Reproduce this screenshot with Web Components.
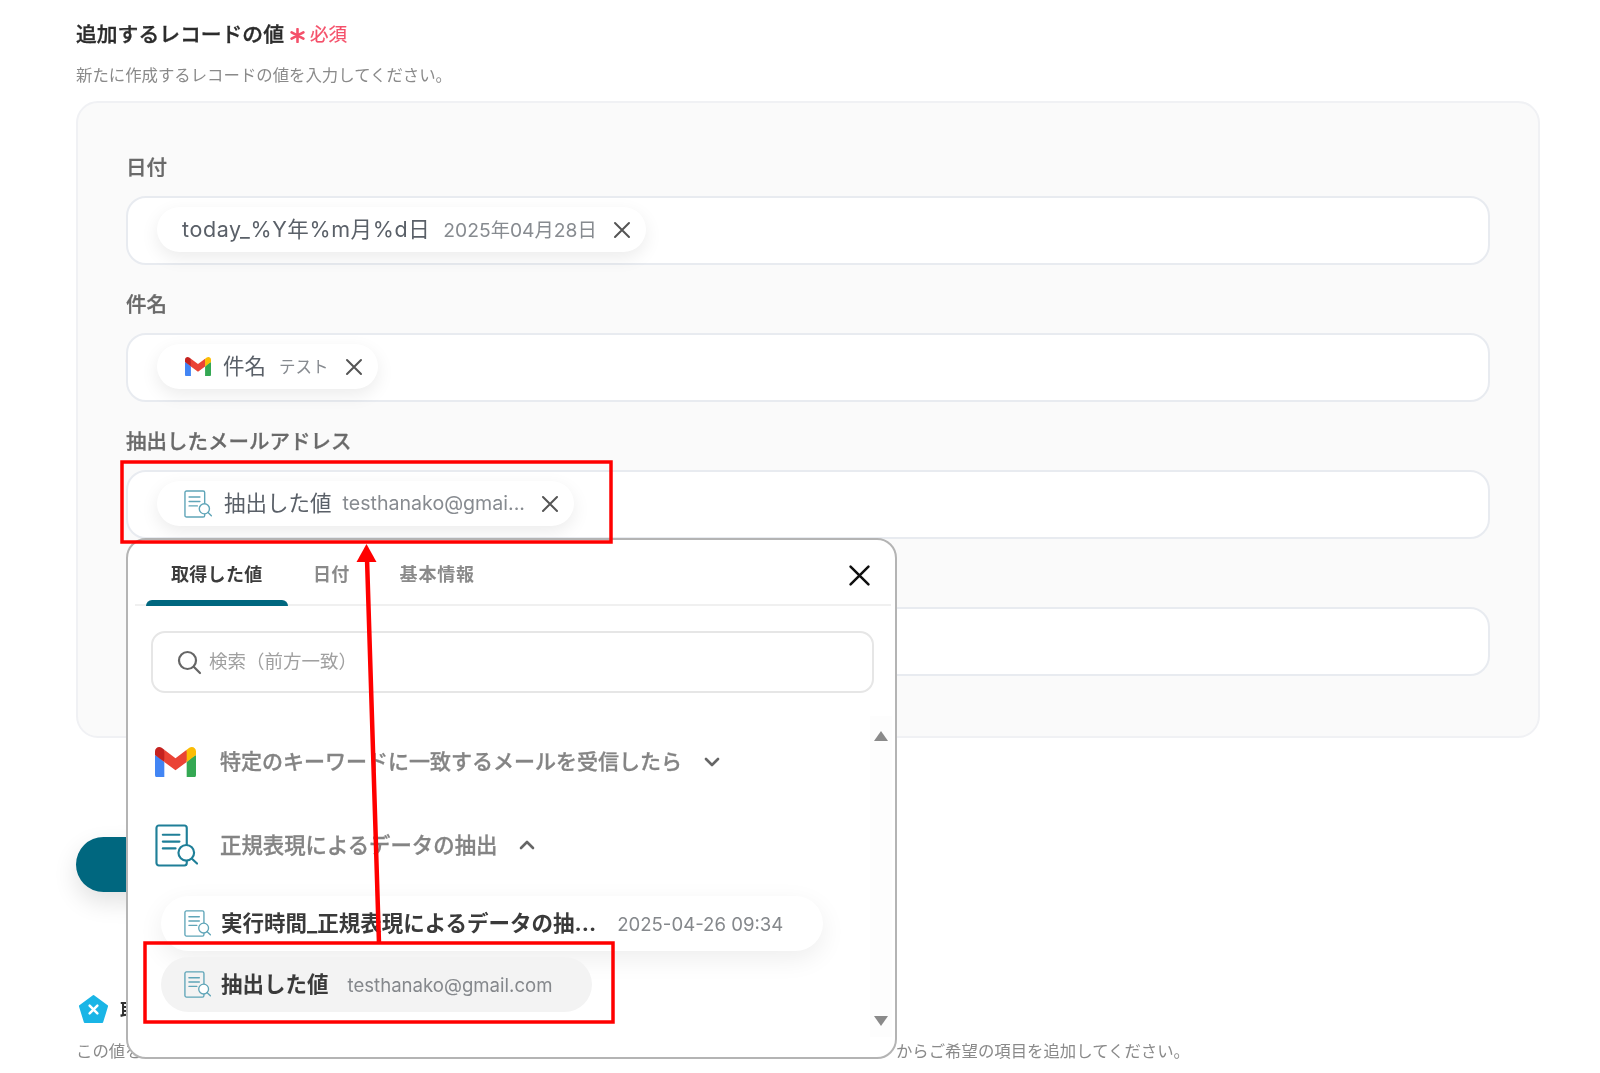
<!DOCTYPE html>
<html lang="ja">
<head>
<meta charset="utf-8">
<title>追加するレコードの値</title>
<style>
  html, body { margin: 0; background: #fff; }
  body { font-family: Inter, "Noto Sans CJK JP", sans-serif; color: #333; }
</style>
</head>
<body>
<record-page>
  <span slot="title">追加するレコードの値</span>
  <span slot="desc">新たに作成するレコードの値を入力してください。</span>

  <record-field label="日付">
    <value-chip label="today_%Y年%m月%d日" value="2025年04月28日" style="--label-space:.6px"></value-chip>
  </record-field>
  <record-field label="件名">
    <value-chip label="件名" value="テスト" small>
      <gmail-icon slot="icon" style="width:26px;margin-left:3px"></gmail-icon>
    </value-chip>
  </record-field>
  <record-field label="抽出したメールアドレス">
    <value-chip label="抽出した値" value="testhanako@gmai..." style="--value-gap:11px;--value-size:19.600px">
      <doc-icon slot="icon" light style="width:28px;margin-left:2px"></doc-icon>
    </value-chip>
  </record-field>
  <record-field label="　"></record-field>

  <value-popup slot="overlay"></value-popup>
  <red-marks slot="overlay"></red-marks>
</record-page>

<script>
const FONT = 'Inter, "Noto Sans CJK JP", sans-serif';

class GmailIcon extends HTMLElement {
  constructor() {
    super();
    this.attachShadow({ mode: 'open' });
    this.shadowRoot.innerHTML = `
      <style>:host { display: block; flex: none; } svg { display: block; width: 100%; height: auto; }</style>
      <svg viewBox="0 0 256 193">
        <path fill="#4285F4" d="M58.182 192.05V93.14L27.507 65.077 0 49.504v125.091c0 9.658 7.825 17.455 17.455 17.455h40.727Z"/>
        <path fill="#34A853" d="M197.818 192.05h40.727c9.659 0 17.455-7.826 17.455-17.455V49.505l-31.156 17.837-27.026 25.798v98.91Z"/>
        <path fill="#EA4335" d="m58.182 93.14-4.174-38.647 4.174-36.989L128 69.868l69.818-52.364 4.669 34.992-4.669 40.644L128 145.504z"/>
        <path fill="#FBBC04" d="M197.818 17.504V93.14L256 49.504V26.231c0-21.585-24.64-33.89-41.89-20.945l-16.292 12.218Z"/>
        <path fill="#C5221F" d="M0 49.504l26.759 20.07L58.182 93.14V17.504L41.89 5.286C24.61-7.66 0 4.646 0 26.23v23.273Z"/>
      </svg>`;
  }
}

class DocIcon extends HTMLElement {
  constructor() {
    super();
    this.attachShadow({ mode: 'open' });
    const color = this.hasAttribute('light') ? '#5fa5b8' : '#1f7f98';
    this.shadowRoot.innerHTML = `
      <style>:host { display: block; flex: none; } svg { display: block; width: 100%; height: auto; }</style>
      <svg viewBox="0 0 44 44" fill="none" stroke="${color}" stroke-width="2.200" stroke-linecap="round">
        <rect x="1.500" y="1.500" width="31" height="41" rx="2.500"/>
        <path d="M8 11h17M8 18h17M8 25h13"/>
        <circle cx="32" cy="29.500" r="8" fill="#fff"/>
        <path d="M37.800 35.500 43 40.500"/>
      </svg>`;
  }
}

class CloseIcon extends HTMLElement {
  constructor() {
    super();
    this.attachShadow({ mode: 'open' });
    const color = this.getAttribute('color') || '#555';
    this.shadowRoot.innerHTML = `
      <style>:host { display: block; flex: none; width: 18px; height: 18px; } svg { display: block; width: 100%; height: 100%; }</style>
      <svg viewBox="0 0 18 18" fill="none" stroke="${color}" stroke-width="2" stroke-linecap="round">
        <path d="M2 2l14 14M16 2 2 16"/>
      </svg>`;
  }
}

class ValueChip extends HTMLElement {
  constructor() {
    super();
    this.attachShadow({ mode: 'open' });
    this.shadowRoot.innerHTML = `
      <style>
        :host { display: inline-flex; align-items: center; height: 45px; padding: 0 15px 0 25px; box-sizing: border-box;
          background: #fff; border-radius: 23px; box-shadow: 0 6px 18px rgba(0,0,0,.08); }
        .label { font-size: 21.500px; letter-spacing: var(--label-space, 0); color: #5a6068; white-space: nowrap; margin-bottom: 4px; }
        ::slotted([slot=icon]) { margin-right: 12px; }
        .value { font-size: var(--value-size, 19.300px); color: #878b90; margin-left: var(--value-gap, 13px); white-space: nowrap; margin-bottom: 2px; }
        :host([small]) .value { font-size: 16.500px; }
        close-icon { margin-left: 16px; }
      </style>
      <slot name="icon"></slot>
      <span class="label"></span><span class="value"></span>
      <close-icon></close-icon>`;
    this.shadowRoot.querySelector('.label').textContent = this.getAttribute('label');
    this.shadowRoot.querySelector('.value').textContent = this.getAttribute('value');
  }
}

class RecordField extends HTMLElement {
  constructor() {
    super();
    this.attachShadow({ mode: 'open' });
    this.shadowRoot.innerHTML = `
      <style>
        :host { display: block; }
        .label { height: 30px; line-height: 33px; font-size: 20.500px; font-weight: 500; color: #6a6a6a; margin-bottom: 15px;
          -webkit-text-stroke: .3px #6a6a6a; }
        .box { height: 69px; box-sizing: border-box; background: #fff; border: 2px solid #e8ebf0; border-radius: 20px;
          display: flex; align-items: center; padding: 0 0 2px 29px; }
      </style>
      <div class="label"></div>
      <div class="box"><slot></slot></div>`;
    this.shadowRoot.querySelector('.label').textContent = this.getAttribute('label');
  }
}

class PopupRow extends HTMLElement {
  constructor() {
    super();
    this.attachShadow({ mode: 'open' });
    this.shadowRoot.innerHTML = `
      <style>
        :host { display: flex; align-items: center; height: 40px; padding-left: 26px; }
        .text { font-size: var(--row-size, 21px); font-weight: 500; color: #848484; margin-left: var(--row-gap, 22px); white-space: nowrap;
          margin-bottom: 4px; -webkit-text-stroke: .3px #848484; }
        svg { width: 18px; height: 12px; margin-left: 21px; flex: none; }
        :host([open]) svg { transform: rotate(180deg); }
      </style>
      <slot></slot>
      <span class="text"></span>
      <svg viewBox="0 0 18 12" fill="none" stroke="#666" stroke-width="2.600" stroke-linecap="round" stroke-linejoin="round"><path d="M3 3l6 6 6-6"/></svg>`;
    this.shadowRoot.querySelector('.text').textContent = this.getAttribute('text');
  }
}

class PopupItem extends HTMLElement {
  constructor() {
    super();
    this.attachShadow({ mode: 'open' });
    this.shadowRoot.innerHTML = `
      <style>
        :host { display: flex; align-items: center; height: 55px; box-sizing: border-box; margin-left: 32px;
          padding-left: 23px; border-radius: 28px; background: #fff; box-shadow: 0 8px 26px rgba(0,0,0,.07); width: max-content; }
        :host([active]) { background: #f3f3f3; box-shadow: none; }
        doc-icon { width: 27px; margin-right: 10px; }
        .text { font-size: 21.500px; font-weight: 700; color: #3a3a3a; white-space: nowrap; margin-bottom: 4px; }
        .value { font-size: 18.600px; color: #85888c; white-space: nowrap; margin-left: var(--item-gap, 19px); margin-right: 40px; }
      </style>
      <doc-icon light></doc-icon>
      <span class="text"></span><span class="value"></span>`;
    this.shadowRoot.querySelector('.text').textContent = this.getAttribute('text');
    this.shadowRoot.querySelector('.value').textContent = this.getAttribute('value');
  }
}

class ValuePopup extends HTMLElement {
  constructor() {
    super();
    this.attachShadow({ mode: 'open' });
    this.shadowRoot.innerHTML = `
      <style>
        :host { position: absolute; left: 126px; top: 538px; width: 771px; height: 521px; box-sizing: border-box;
          background: #fff; border: 2px solid #b4b4b4; border-radius: 20px; font-family: ${FONT}; overflow: hidden; }
        .tabs { display: flex; align-items: flex-start; height: 66px; box-sizing: border-box; margin: 0 4px 0 7px; padding-left: 11px;
          border-bottom: 2px solid #f0f0f0; }
        .tab { height: 66px; box-sizing: border-box; padding: 20px 25px 0; font-size: 18px; letter-spacing: .3px; line-height: 30px; font-weight: 700; color: #8a8a8a;
          white-space: nowrap; position: relative; }
        .tab.wide { letter-spacing: .8px; }
        .tab.on { color: #3c3c3c; width: 142px; padding-right: 0; }
        .tab.on::after { content: ""; position: absolute; left: 0; right: 0; bottom: 0; height: 6px; background: #00677f; border-radius: 6px 6px 0 0; }
        close-icon { width: 23px; height: 23px; margin: 24px 20px 0 auto; }
        .search { height: 62px; box-sizing: border-box; margin: 25px 21px 0 23px; border: 2px solid #e6e6e6; border-radius: 14px;
          display: flex; align-items: center; padding-left: 23px; }
        .search svg { width: 26px; height: 26px; flex: none; margin-right: 7px; margin-bottom: 1px; }
        .search span { font-size: 18.500px; color: #a0a0a0; white-space: nowrap; margin-bottom: 4px; }
        .list { margin-top: 49px; padding-left: 1px; }
        popup-row + popup-row { margin-top: 43px; }
        popup-item { margin-top: 6px; }
        popup-item.first { margin-top: 31px; }
        .track { position: absolute; right: 3px; top: 176px; bottom: 20px; width: 22px; background: #fdfdfd;
          display: flex; flex-direction: column; justify-content: space-between; align-items: center; padding: 14px 0 10px; box-sizing: border-box; }
        .track svg { width: 16px; height: 12px; display: block; }
      </style>
      <div class="tabs">
        <div class="tab on">取得した値</div>
        <div class="tab">日付</div>
        <div class="tab wide">基本情報</div>
        <close-icon color="#111"></close-icon>
      </div>
      <div class="search">
        <svg viewBox="0 0 26 26" fill="none" stroke="#666" stroke-width="2.200" stroke-linecap="round"><circle cx="11.500" cy="11.500" r="8.500"/><path d="M18 18l6 6"/></svg>
        <span>検索（前方一致）</span>
      </div>
      <div class="list">
        <popup-row text="特定のキーワードに一致するメールを受信したら" style="--row-gap:24px"><gmail-icon style="width:41px"></gmail-icon></popup-row>
        <popup-row text="正規表現によるデータの抽出" style="--row-size:21.400px" open><doc-icon style="width:43px"></doc-icon></popup-row>
        <popup-item class="first" text="実行時間_正規表現によるデータの抽..." value="2025-04-26 09:34" style="--item-gap:21px"></popup-item>
        <popup-item active text="抽出した値" value="testhanako@gmail.com"></popup-item>
      </div>
      <div class="track">
        <svg viewBox="0 0 16 12"><path fill="#8a8a8a" d="M8 1l7 10H1z"/></svg>
        <svg viewBox="0 0 16 12"><path fill="#8a8a8a" d="M8 11 15 1H1z"/></svg>
      </div>`;
  }
}

class RedMarks extends HTMLElement {
  constructor() {
    super();
    this.attachShadow({ mode: 'open' });
    this.shadowRoot.innerHTML = `
      <style>
        :host { position: absolute; left: 0; top: 0; width: 1600px; height: 1073px; pointer-events: none; }
        svg { display: block; }
      </style>
      <svg width="1600" height="1073" fill="none" stroke="#f00" stroke-width="3.500">
        <rect x="122" y="462" width="489" height="80"/>
        <rect x="145" y="943" width="468" height="79"/>
        <path stroke-width="4.500" d="M367 558 379 943"/>
        <path fill="#f00" stroke="none" d="M366.500 544 376.500 562H356.500Z"/>
      </svg>`;
  }
}

class RecordPage extends HTMLElement {
  constructor() {
    super();
    this.attachShadow({ mode: 'open' });
    this.shadowRoot.innerHTML = `
      <style>
        :host { display: block; position: relative; width: 1600px; height: 1073px; overflow: hidden; box-sizing: border-box;
          padding: 18px 60px 0 76px; font-family: ${FONT}; filter: blur(.5px); }
        .title { display: flex; align-items: center; height: 30px; font-size: 20.800px; font-weight: 500; color: #2c2c2c; white-space: nowrap;
          -webkit-text-stroke: .35px #2c2c2c; }
        .req { color: #f4506a; -webkit-text-stroke: .2px #f4506a; font-size: 18.500px; margin-left: 6px; display: flex; align-items: center; gap: 5px; font-weight: 400; }
        .req svg { width: 15px; height: 15px; margin-top: 4px; }
        .desc { margin-top: 15px; height: 24px; line-height: 24px; font-size: 16.400px; color: #8a8a8a; white-space: nowrap; }
        .card { margin-top: 14px; box-sizing: border-box; height: 637px; background: #fafafa; border: 2px solid #f0f1f4; border-radius: 22px;
          padding: 48px 48px 0 48px; display: flex; flex-direction: column; gap: 23px; }
        .save { margin-top: 99px; width: 300px; height: 55px; border-radius: 28px; background: #00677f; box-shadow: 0 10px 24px rgba(0,0,0,.12); }
        .info { margin-top: 102px; height: 30px; display: flex; align-items: center; font-size: 18px; font-weight: 700; color: #333; white-space: nowrap; }
        .info svg { width: 31px; height: 31px; margin: 0 11px 0 2px; flex: none; }
        .note { margin-top: 15px; height: 24px; line-height: 24px; font-size: 16.400px; color: #8a8a8a; width: 1114px; display: flex; justify-content: space-between; white-space: nowrap; }
      </style>
      <div class="title">
        <slot name="title"></slot>
        <span class="req">
          <svg viewBox="0 0 14 14" stroke="#f4506a" stroke-width="2.400" stroke-linecap="round"><path d="M7 1v12M1.500 4l11 6M12.500 4l-11 6"/></svg>
          必須
        </span>
      </div>
      <div class="desc"><slot name="desc"></slot></div>
      <div class="card"><slot></slot></div>
      <div class="save"></div>
      <div class="info">
        <svg viewBox="0 0 32 32"><path fill="#1ab5e6" d="M16 2 30 12.500 25 29H7L2 12.500Z" stroke="#1ab5e6" stroke-width="2" stroke-linejoin="round"/><path d="M12 12l8 8M20 12l-8 8" stroke="#fff" stroke-width="2.600" stroke-linecap="round"/></svg>
        取得する値
      </div>
      <div class="note"><span>この値を</span><span>からご希望の項目を追加してください。</span></div>
      <slot name="overlay"></slot>`;
  }
}

customElements.define('gmail-icon', GmailIcon);
customElements.define('doc-icon', DocIcon);
customElements.define('close-icon', CloseIcon);
customElements.define('value-chip', ValueChip);
customElements.define('record-field', RecordField);
customElements.define('popup-row', PopupRow);
customElements.define('popup-item', PopupItem);
customElements.define('value-popup', ValuePopup);
customElements.define('red-marks', RedMarks);
customElements.define('record-page', RecordPage);
</script>
</body>
</html>
